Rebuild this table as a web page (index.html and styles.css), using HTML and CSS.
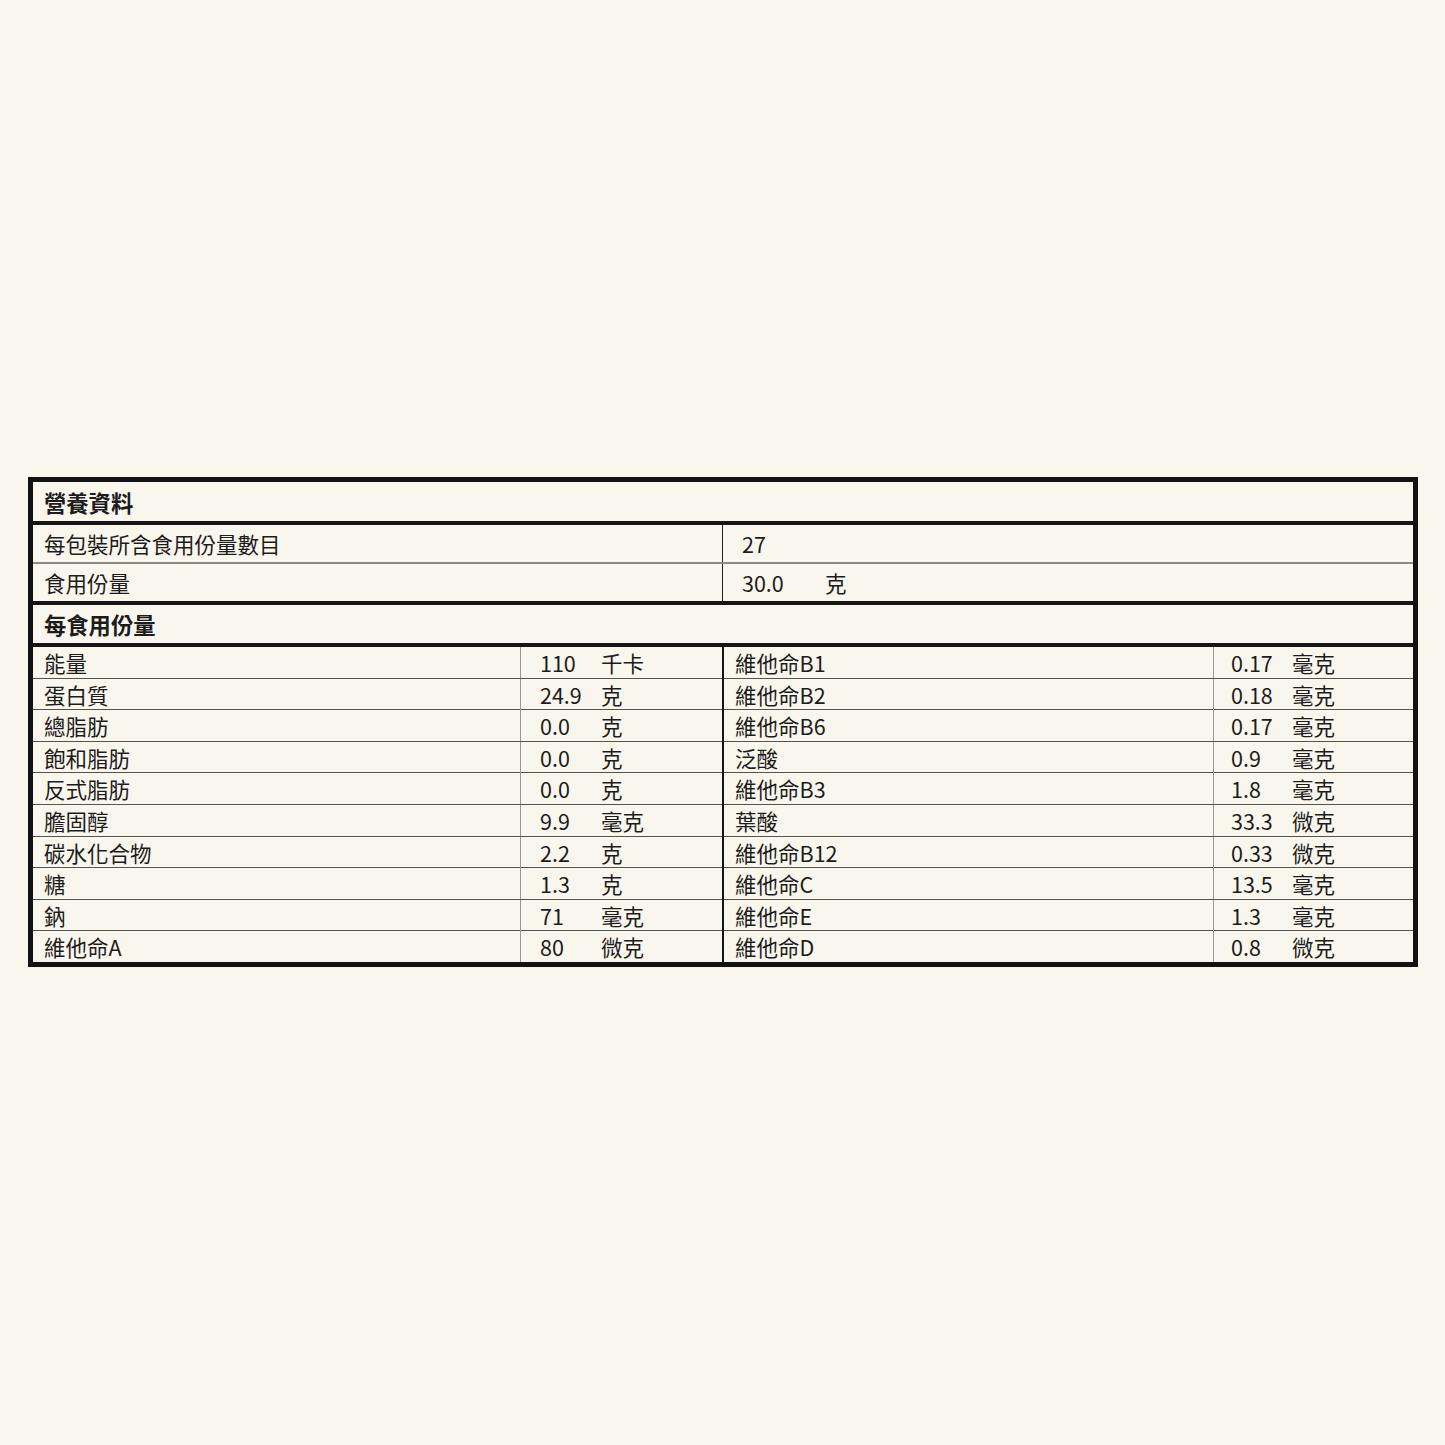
FILE: index.html
```html
<!DOCTYPE html>
<html lang="zh-Hant">
<head>
<meta charset="utf-8">
<link rel="stylesheet" href="styles.css">
</head>
<body>
<div class="panel">
  <div class="title">營養資料</div>
  <div class="serving">
    <div class="srow sep">
      <div class="slabel">每包裝所含食用份量數目</div>
      <div class="sval"><span class="snum">27</span></div>
    </div>
    <div class="srow">
      <div class="slabel">食用份量</div>
      <div class="sval"><span class="snum">30.0</span><span>克</span></div>
    </div>
  </div>
  <div class="title sub">每食用份量</div>
  <div class="data">
    <div class="half left">
      <div class="row"><div class="lab">能量</div><div class="val"><span class="num">110</span><span>千卡</span></div></div>
      <div class="row"><div class="lab">蛋白質</div><div class="val"><span class="num">24.9</span><span>克</span></div></div>
      <div class="row"><div class="lab">總脂肪</div><div class="val"><span class="num">0.0</span><span>克</span></div></div>
      <div class="row"><div class="lab">飽和脂肪</div><div class="val"><span class="num">0.0</span><span>克</span></div></div>
      <div class="row"><div class="lab">反式脂肪</div><div class="val"><span class="num">0.0</span><span>克</span></div></div>
      <div class="row"><div class="lab">膽固醇</div><div class="val"><span class="num">9.9</span><span>毫克</span></div></div>
      <div class="row"><div class="lab">碳水化合物</div><div class="val"><span class="num">2.2</span><span>克</span></div></div>
      <div class="row"><div class="lab">糖</div><div class="val"><span class="num">1.3</span><span>克</span></div></div>
      <div class="row"><div class="lab">鈉</div><div class="val"><span class="num">71</span><span>毫克</span></div></div>
      <div class="row"><div class="lab">維他命A</div><div class="val"><span class="num">80</span><span>微克</span></div></div>
    </div>
    <div class="half right">
      <div class="row"><div class="lab">維他命B1</div><div class="val"><span class="num">0.17</span><span>毫克</span></div></div>
      <div class="row"><div class="lab">維他命B2</div><div class="val"><span class="num">0.18</span><span>毫克</span></div></div>
      <div class="row"><div class="lab">維他命B6</div><div class="val"><span class="num">0.17</span><span>毫克</span></div></div>
      <div class="row"><div class="lab">泛酸</div><div class="val"><span class="num">0.9</span><span>毫克</span></div></div>
      <div class="row"><div class="lab">維他命B3</div><div class="val"><span class="num">1.8</span><span>毫克</span></div></div>
      <div class="row"><div class="lab">葉酸</div><div class="val"><span class="num">33.3</span><span>微克</span></div></div>
      <div class="row"><div class="lab">維他命B12</div><div class="val"><span class="num">0.33</span><span>微克</span></div></div>
      <div class="row"><div class="lab">維他命C</div><div class="val"><span class="num">13.5</span><span>毫克</span></div></div>
      <div class="row"><div class="lab">維他命E</div><div class="val"><span class="num">1.3</span><span>毫克</span></div></div>
      <div class="row"><div class="lab">維他命D</div><div class="val"><span class="num">0.8</span><span>微克</span></div></div>
    </div>
  </div>
</div>
</body>
</html>
```

FILE: styles.css
```css
html, body {
  margin: 0;
  padding: 0;
  background: #f9f6ed;
}
body {
  font-family: "Noto Sans CJK TC", "Noto Sans", sans-serif;
  font-size: 21.5px;
  color: #1c1c1c;
  width: 1445px;
  height: 1445px;
  overflow: hidden;
}
.panel {
  box-sizing: border-box;
  margin: 477px 0 0 28px;
  width: 1390px;
  border: 5px solid #121212;
}
.title {
  height: 39px;
  display: flex;
  align-items: center;
  padding-left: 11px;
  font-weight: 700;
  font-size: 22.3px;
  border-bottom: 4px solid #151515;
}
.sub {
  height: 38px;
}
.serving {
  border-bottom: 4px solid #151515;
}
.srow {
  display: grid;
  grid-template-columns: 689px 1fr;
  height: 37px;
}
.srow.sep {
  height: 37px;
  border-bottom: 2px solid #8d8a84;
}
.slabel {
  display: flex;
  align-items: center;
  padding-left: 11px;
}
.sval {
  display: flex;
  align-items: center;
  padding-left: 19px;
  border-left: 1.5px solid #222;
}
.snum {
  display: inline-block;
  width: 83px;
}
.data {
  display: grid;
  grid-template-columns: 689px 1fr;
}
.half.right {
  border-left: 2.5px solid #151515;
}
.row {
  display: grid;
  height: 30.6px;
  border-bottom: 1px solid #55534f;
}
.row:last-child {
  border-bottom: none;
  height: 31px;
}
.left .row {
  grid-template-columns: 487px 1fr;
}
.right .row {
  grid-template-columns: 489px 1fr;
}
.lab {
  display: flex;
  align-items: center;
  padding-left: 11px;
}
.val {
  display: flex;
  align-items: center;
  padding-left: 19px;
  border-left: 1.5px solid #9a978f;
}
.right .val {
  padding-left: 17px;
}
.num {
  display: inline-block;
  width: 61px;
}
```
